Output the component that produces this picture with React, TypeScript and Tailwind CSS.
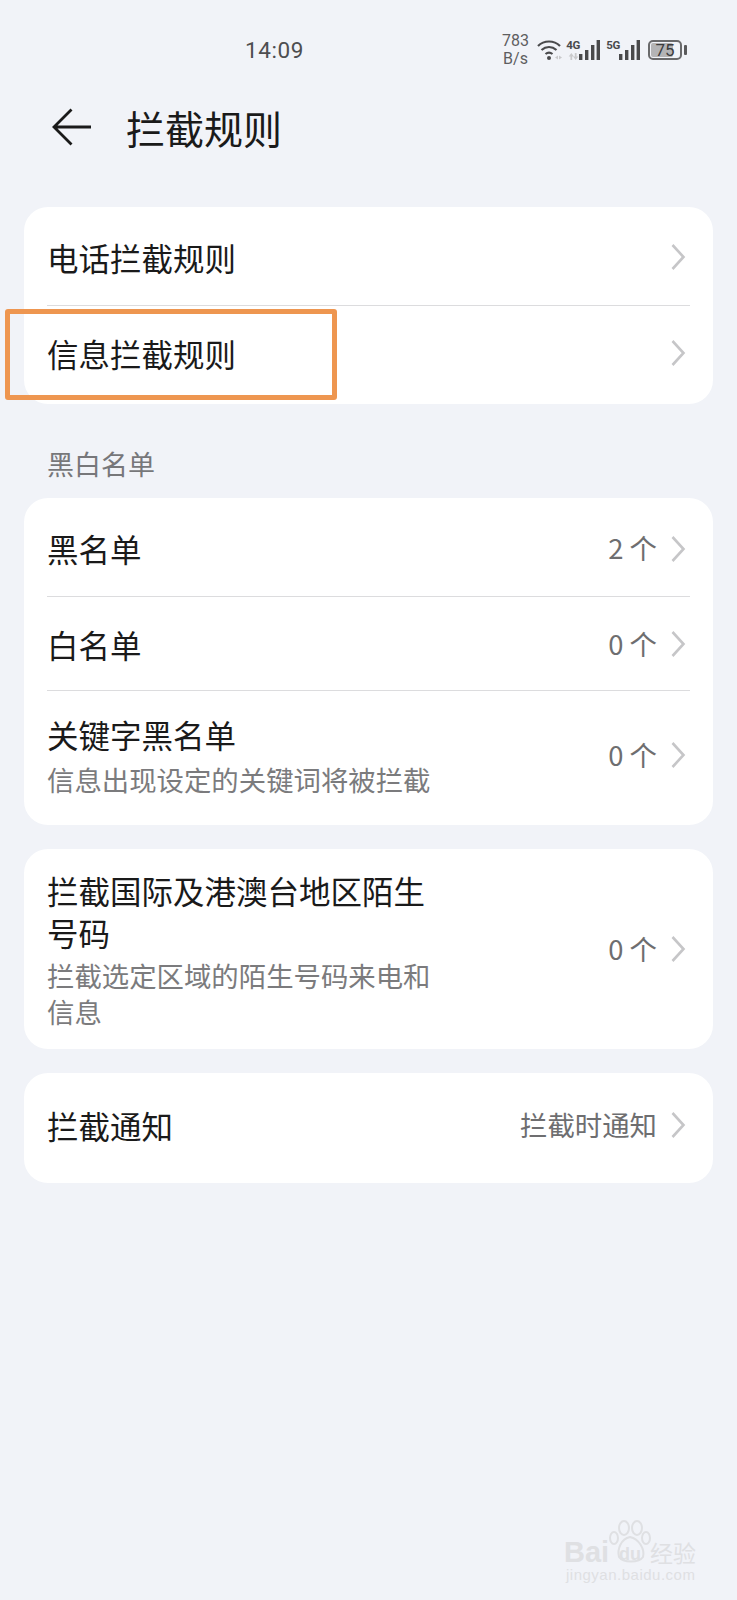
import React from "react";

const font = { fontFamily: '"Noto Sans CJK SC", "Noto Sans", sans-serif' };

function Chevron({ lift }: { lift?: string }) {
  return (
    <svg width="16" height="28" viewBox="0 0 16 28" fill="none" className={`shrink-0 ${lift ?? ""}`}>
      <path d="M2.5 2 L13.5 14 L2.5 26" stroke="#c6c6c8" strokeWidth="2.6" />
    </svg>
  );
}

function Row({ title, sub, value, h, divider, shift, lift }: { title: string; sub?: string; value?: string; h: string; divider?: boolean; shift?: string; lift?: string }) {
  return (
    <div className={`relative flex items-center pl-[23px] pr-[27px] ${h} ${shift ?? ""}`}>
      <div className="flex-1 min-w-0">
        <div className="text-[31.5px] leading-[40px] text-[#1a1a1a]">{title}</div>
        {sub && <div className="text-[27.4px] leading-[36px] text-[#7b7b7d] mt-[7px]">{sub}</div>}
      </div>
      {value && <span className="text-[27.4px] text-[#6e6e70] mr-[13px] whitespace-nowrap">{value}</span>}
      <Chevron lift={lift} />
      {divider && <div className="absolute left-[23px] right-[23px] bottom-0 h-px bg-[#dcdcde]" />}
    </div>
  );
}

function Bars() {
  return (
    <svg width="21" height="20" viewBox="0 0 21 20" className="shrink-0">
      <rect x="0" y="14" width="3.4" height="6" fill="#49494b" />
      <rect x="6" y="10" width="3.4" height="10" fill="#49494b" />
      <rect x="12" y="5" width="3.4" height="15" fill="#49494b" />
      <rect x="17.6" y="0" width="3.4" height="20" fill="#49494b" />
    </svg>
  );
}

function Network({ label, arrows }: { label: string; arrows?: boolean }) {
  return (
    <div className="flex items-end h-[20px]">
      <div className="w-[12px] h-[20px] flex flex-col items-center">
        <span className="text-[11.5px] leading-[10px] font-bold text-[#4a4a4c] tracking-[-0.5px]" style={{ fontFamily: "Roboto, sans-serif" }}>{label}</span>
        {arrows && (
          <svg width="11" height="8" viewBox="0 0 11 8" className="mt-[3px]" fill="#c9c9cb">
            <path d="M3 0 L6 4 H4 V8 H2 V4 H0 Z" />
            <path d="M8 8 L5 4 H7 V0 H9 V4 H11 Z" />
          </svg>
        )}
      </div>
      <Bars />
    </div>
  );
}

function StatusIcons() {
  return (
    <div className="flex items-center">
      <div className="text-[16px] leading-[18px] text-[#5e5e60] text-center w-[27px]" style={{ fontFamily: "Roboto, sans-serif" }}>
        783<br />B/s
      </div>
      <svg width="26" height="20" viewBox="0 0 26 20" fill="none" className="ml-[8px]">
        <path d="M1 6 C7 0 17 0 23 6" stroke="#4a4a4c" strokeWidth="2.2" />
        <path d="M4.5 10 C9 6 15 6 19.5 10" stroke="#4a4a4c" strokeWidth="2.2" />
        <path d="M8.5 14 C10.5 12.4 13.5 12.4 15.5 14" stroke="#4a4a4c" strokeWidth="2.2" />
        <circle cx="12" cy="18" r="2" fill="#4a4a4c" />
        <path d="M18 17.5 l3 -2 v4 Z M22 15.5 l3 2 l-3 2 Z" fill="#c9c9cb" />
      </svg>
      <div className="ml-[4px]"><Network label="4G" arrows /></div>
      <div className="ml-[7px]"><Network label="5G" /></div>
      <div className="ml-[8px] flex items-center">
        <div className="relative w-[34px] h-[20px] border-2 border-[#6a6a6c] rounded-[5px] overflow-hidden flex items-center justify-center">
          <div className="absolute left-[1px] top-[1px] bottom-[1px] w-[22px] bg-[#b4b4b6] rounded-[2px]" />
          <span className="relative text-[17px] leading-none text-[#3c3c3e]" style={{ fontFamily: "Roboto, sans-serif" }}>75</span>
        </div>
        <div className="w-[3px] h-[10px] bg-[#5a5a5c] ml-[2px] rounded-[1px]" />
      </div>
    </div>
  );
}

function Watermark() {
  return (
    <div className="absolute left-[564px] top-[1519px] w-[150px] h-[70px] text-[#dfe0e3] pointer-events-none">
      <svg width="44" height="46" viewBox="0 0 44 46" className="absolute left-[45px] top-0" fill="none" stroke="#dfe0e3" strokeWidth="2">
        <ellipse cx="15" cy="9" rx="5" ry="7" />
        <ellipse cx="28" cy="9" rx="5" ry="7" />
        <ellipse cx="5" cy="19" rx="4" ry="6" />
        <ellipse cx="37" cy="19" rx="4" ry="6" />
        <path d="M21 18 C12 20 8 30 10 38 C14 44 30 44 34 38 C36 30 30 20 21 18 Z" />
      </svg>
      <span className="absolute left-0 top-[18px] text-[29px] leading-[30px] font-bold" style={{ fontFamily: '"Liberation Sans", sans-serif' }}>Bai</span>
      <span className="absolute left-[55px] top-[25px] text-[18px] leading-[20px] font-bold" style={{ fontFamily: '"Liberation Sans", sans-serif' }}>du</span>
      <span className="absolute left-[86px] top-[18px] text-[23px] leading-[30px]">经验</span>
      <span className="absolute left-[2px] top-[47px] text-[15px] leading-[18px] tracking-[0.5px]" style={{ fontFamily: '"Liberation Sans", sans-serif' }}>jingyan.baidu.com</span>
    </div>
  );
}

export default function App() {
  return (
    <div className="relative w-[737px] h-[1600px] bg-[#f1f3f8] overflow-hidden" style={font}>
      {/* status bar */}
      <div className="flex items-center justify-between h-[80px] pt-[20px] pl-[245px] pr-[50px]">
        <span className="text-[22.5px] leading-[28px] tracking-[0.6px] text-[#4e4e50]" style={{ fontFamily: "Roboto, sans-serif" }}>14:09</span>
        <StatusIcons />
      </div>

      {/* header */}
      <div className="flex items-center h-[84px] pl-[52px] mt-[5px]">
        <svg width="40" height="38" viewBox="0 0 40 38" fill="none" className="shrink-0">
          <path d="M19.5 1.5 L2 19 L19.5 36.5 M2 19 H39" stroke="#1a1a1a" strokeWidth="2.8" />
        </svg>
        <h1 className="ml-[34px] text-[39px] leading-[50px] text-[#1a1a1a] font-normal">拦截规则</h1>
      </div>

      <div className="mx-6 mt-[38px] flex flex-col">
        <div className="bg-white rounded-[24px] overflow-hidden">
          <Row title="电话拦截规则" h="h-[99px]" shift="pt-[1px]" divider />
          <Row title="信息拦截规则" h="h-[98px]" shift="pb-[4px]" />
        </div>

        <div className="text-[27px] leading-[36px] text-[#77777a] pl-[23px] mt-[42px] mb-[16px]">黑白名单</div>

        <div className="bg-white rounded-[24px] overflow-hidden">
          <Row title="黑名单" value="2 个" h="h-[99px]" shift="pt-[1px]" lift="mt-[1px]" divider />
          <Row title="白名单" value="0 个" h="h-[94px]" shift="pb-[1px]" divider />
          <Row title="关键字黑名单" sub="信息出现设定的关键词将被拦截" value="0 个" h="h-[134px]" shift="pb-[6px]" />
        </div>

        <div className="bg-white rounded-[24px] overflow-hidden mt-[24px]">
          <div className="flex items-center pl-[23px] pr-[27px] h-[200px] pb-[1px]">
            <div className="w-[396px]">
              <div className="text-[31.5px] leading-[42px] text-[#1a1a1a]">拦截国际及港澳台地区陌生号码</div>
              <div className="text-[27.4px] leading-[36px] text-[#7b7b7d] mt-[4px]">拦截选定区域的陌生号码来电和信息</div>
            </div>
            <div className="flex-1" />
            <span className="text-[27.4px] text-[#6e6e70] mr-[13px] whitespace-nowrap">0 个</span>
            <Chevron />
          </div>
        </div>

        <div className="bg-white rounded-[24px] overflow-hidden mt-[24px]">
          <Row title="拦截通知" value="拦截时通知" h="h-[110px]" shift="pb-[6px]" />
        </div>
      </div>

      {/* annotation box */}
      <div className="absolute left-[5px] top-[309px] w-[332px] h-[91px] border-[5px] border-[#ee9650] rounded-[3px] pointer-events-none" />

      <Watermark />
    </div>
  );
}
